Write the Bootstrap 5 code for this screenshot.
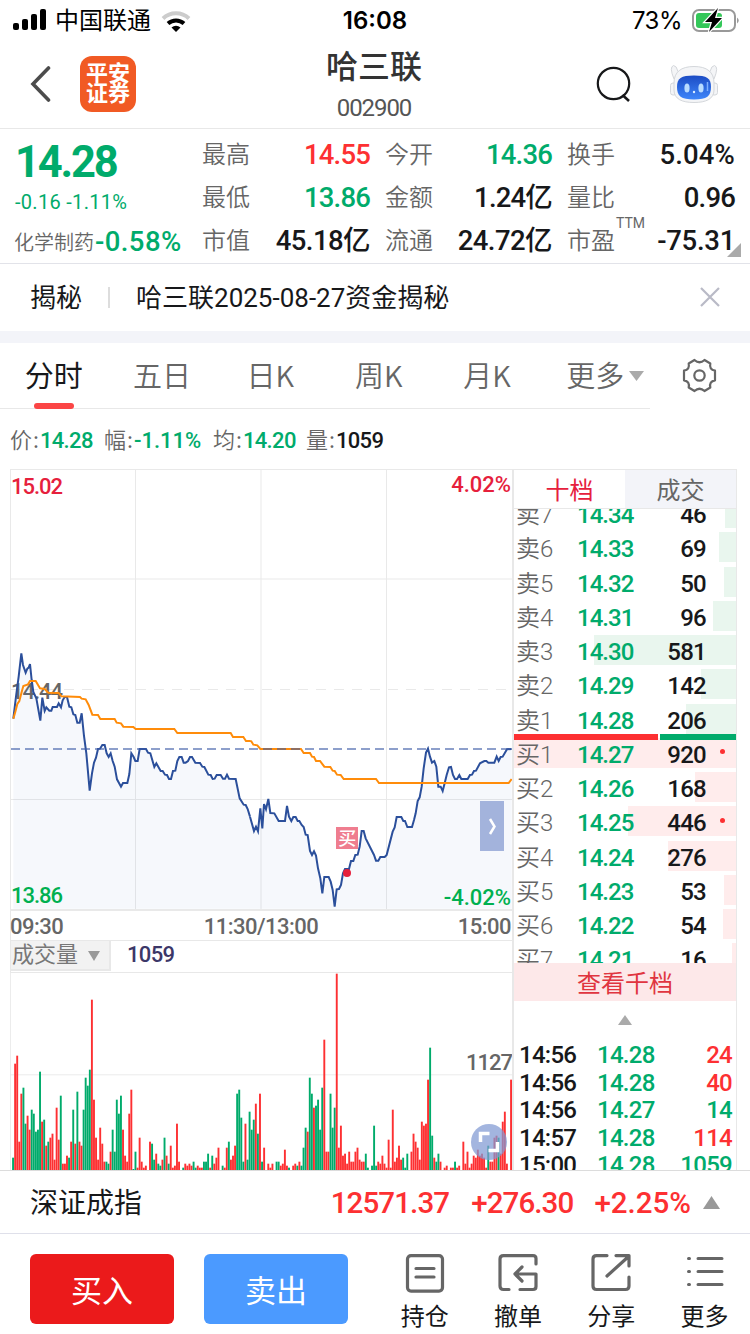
<!DOCTYPE html>
<html lang="zh-CN">
<head>
<meta charset="utf-8">
<meta name="viewport" content="width=device-width, initial-scale=1">
<title>哈三联 002900</title>
<link href="https://cdn.jsdelivr.net/npm/bootstrap@5.3.0/dist/css/bootstrap.min.css" rel="stylesheet">
<style>
  body { width: 750px; height: 1334px; overflow: hidden; background: #fff; color: #17181a; font-family: Roboto, "Noto Sans CJK SC", sans-serif; font-size: 24px; line-height: 1; }
  svg { display: block; flex: none; }
  .up { color: #fd3032; } .down { color: #00ab6b; } .soft { color: #666; }
  .num { font-weight: 500; letter-spacing: -.03em; white-space: nowrap; }
  .cjk-light { font-family: "Noto Sans CJK SC", sans-serif; font-weight: 350; }
  .statusbar { height: 40px; padding: 0 9px 0 13px; font-family: Inter, "Noto Sans CJK SC", sans-serif; color: #000; }
  .titlebar { height: 89px; border-bottom: 1px solid #e8e8e8; }
  .broker { width: 56px; height: 56px; border-radius: 12px; background: #f15a24; color: #fff; font-weight: 700; font-size: 22px; line-height: 20px; padding-top: 8px; }
  .stock-name { font-size: 32px; line-height: 40px; font-weight: 500; color: #333; }
  .stock-code { font-size: 24px; line-height: 24px; color: #555; letter-spacing: -.045em; }
  .quote { height: 135px; border-bottom: 1px solid #e2e3e9; }
  .quote-main { width: 202px; padding-left: 15px; }
  .big-price { font-size: 43.5px; line-height: 43px; font-weight: 700; letter-spacing: -.05em; margin-top: 12px; }
  .stats { grid-template-columns: 168px 167px 168px; column-gap: 15px; grid-template-rows: 43px 43px 43px; padding-top: 4px; }
  .stats .num { font-size: 27.5px; }
  .stats .cjk-light { margin-top: -3px; }
  .ttm { position: absolute; left: 49px; top: -3px; font-size: 14px; font-family: Roboto, sans-serif; }
  .corner { position: absolute; right: -6px; bottom: 5px; }
  .news { height: 67px; padding: 0 29px 0 30px; font-size: 26px; }
  .news .sep { width: 2px; height: 21px; background: #ddd; margin: 0 26px; }
  .band { height: 12px; background: #f3f4f9; }
  .tabs { width: 650px; height: 66px; border-bottom: 1px solid #e8e8e8; font-size: 29px; }
  .tabs > div { flex: 1 1 0; position: relative; padding: 0 1px 2px 0; }
  .tabs .on { color: #17181a; font-weight: 400; }
  .tabs .on::after { content: ""; position: absolute; left: 34px; bottom: -1px; width: 40px; height: 6px; border-radius: 3px; background: #fb4545; }
  .legend-row { height: 60px; padding: 1px 0 0 10px; font-size: 22px; }
  .legend-row .cjk-light { letter-spacing: 1px; }
  .board { height: 702px; padding-left: 10px; border-bottom: 1px solid #dcdcdc; overflow: hidden; }
  .charts { width: 502px; flex: none; }
  .depth { width: 225px; flex: none; border: 1px solid #e8e8e8; border-width: 1px 1px 0 2px; }
  .depth-tabs { height: 39px; border-bottom: 1px solid #e8e8e8; }
  .depth-tabs > div { flex: 1 1 0; padding-top: 3px; }
  .depth-tabs .off { background: #f3f4f9; }
  .levels { height: 454px; overflow: hidden; }
  .levels .rows { margin-top: -11px; }
  .level { position: relative; height: 34.27px; line-height: 35px; }
  .level i { position: absolute; right: 0; top: 0; height: 30px; background: #e9f6ee; }
  .level.buy i { background: #ffecec; }
  .level span { position: relative; }
  .level .lbl { width: 63px; padding-left: 2px; font-size: 24px; font-family: Roboto, "Noto Sans CJK SC", sans-serif; font-weight: 350; color: #666; white-space: nowrap; }
  .level .px { width: 60px; letter-spacing: -.04em; }
  .level .vol { width: 69px; text-align: right; }
  .level .dot { width: 5px; height: 5px; border-radius: 50%; background: #fd3032; margin: 0 0 6px 14px; }
  .balance { position: absolute; left: 0; right: 0; top: 225px; height: 6px; gap: 2px; }
  .more-levels { height: 38px; padding-top: 4px; background: #fde8e9; color: #e03540; }
  .ticks { line-height: 27.5px; padding: 0 4px 0 5px; }
  .volbar { height: 33px; border: solid #e8e8e8; border-width: 1px 0 1px 1px; }
  .volpick { width: 100px; height: 30px; background: #f2f2f2; border: solid #e8e8e8; border-width: 0 2px 2px 0; font-size: 22px; color: #777; padding-left: 1px; }
  .indexbar { height: 63px; border-bottom: 1px solid #dfe0ea; padding: 4px 30px 0 30px; font-size: 28px; }
  .indexbar .num { font-size: 29.5px; }
  .footer-bar { height: 100px; padding: 20px 0 0 30px; }
  .trade { width: 144px; height: 70px; flex: none; border: 0; border-radius: 6px; font-size: 31px; color: #fff; padding: 4px 0 0; margin-right: 30px; }
  .tool { width: 93.3px; flex: none; }
  .tool div { margin-top: 11px; }
</style>
</head>
<body>

<div class="statusbar d-flex align-items-center position-relative">
  <svg width="34" height="22" viewBox="0 0 34 22"><rect x="0" y="14" width="6" height="7" rx="2"/><rect x="9" y="10" width="6" height="11" rx="2"/><rect x="18" y="5" width="6" height="16" rx="2"/><rect x="27" y="0" width="6" height="21" rx="2"/></svg>
  <span class="ms-2" style="margin-top:2px">中国联通</span>
  <svg style="margin:3px 0 0 8px" width="34" height="24" viewBox="0 0 34 24"><g fill="none"><path d="M4 8.500a19 19 0 0 1 26 0" stroke="#ccc" stroke-width="4"/><path d="M9 13.600a12 12 0 0 1 16 0" stroke="#000" stroke-width="4"/></g><path d="M12.500 17.500a7 7 0 0 1 9 0L17 22z"/></svg>
  <span class="position-absolute start-50 translate-middle-x fw-semibold" style="top:9px">16:08</span>
  <span class="ms-auto" style="letter-spacing:-.5px;margin-top:2px">73%</span>
  <svg style="margin-left:9px" width="50" height="26" viewBox="0 0 50 26"><rect x="2" y="3" width="42" height="21" rx="6" fill="none" stroke="#999" stroke-width="2"/><path d="M46 10.500q3.500 3 0 6z" fill="#999"/><rect x="5" y="6" width="26" height="15" rx="3" fill="#34c759"/><path d="M27 1L14 15h7l-3 10 13-14h-7z" stroke="#fff" stroke-width="2.500"/><path d="M27 1L14 15h7l-3 10 13-14h-7z"/></svg>
</div>

<header class="titlebar d-flex align-items-start position-relative">
  <svg style="margin:26px 0 0 29px" width="24" height="36" viewBox="0 0 24 36"><path d="M19.500 2L4 18l15.500 16" fill="none" stroke="#4c4c4c" stroke-width="3.600" stroke-linecap="round"/></svg>
  <div class="broker text-center" style="margin:16px 0 0 27px">平安<br>证券</div>
  <div class="position-absolute start-50 translate-middle-x text-center" style="top:7px;margin-left:-1px">
    <div class="stock-name">哈三联</div>
    <div class="stock-code" style="margin-top:9px">002900</div>
  </div>
  <svg class="ms-auto" style="margin:24px 31px 0 0" width="40" height="42" viewBox="594 64 40 42"><circle cx="614.500" cy="83.500" r="15.700" fill="none" stroke="#17181a" stroke-width="2.200"/><path d="M623.500 95l6.500 6" stroke="#17181a" stroke-width="2.500"/></svg>
  <svg style="margin:23px 31px 0 5px" width="50" height="44" viewBox="0 0 50 44">
    <defs><linearGradient id="face" x1="0" y1="0" x2="0" y2="1"><stop offset="0" stop-color="#1c4cc4"/><stop offset="1" stop-color="#3e86fa"/></linearGradient></defs>
    <g fill="#f4f5f7" stroke="#d4d7db" stroke-width="1"><path d="M5 16Q0 4 4.500 2.500q3 0 4.500 6l6-1M45 16Q50 4 45.500 2.500q-3 0-4.500 6l-6-1"/><rect x="1.500" y="20" width="6" height="12" rx="2.500"/><rect x="42.500" y="20" width="6" height="12" rx="2.500"/><path d="M25 3.500C38 3.500 45 9 45 20V27C45 36 37 39.500 25 39.500S5 36 5 27V20C5 9 12 3.500 25 3.500Z"/></g>
    <path d="M25 12.500C38 12.500 42 15 42 24S38 36.500 25 36.500 8 33 8 24 12 12.500 25 12.500Z" fill="url(#face)"/><ellipse cx="18" cy="25" rx="2.600" ry="4.500" fill="#b9dcff"/><ellipse cx="32" cy="25" rx="2.600" ry="4.500" fill="#b9dcff"/><circle cx="25" cy="29" r="1.200" fill="#dceeff"/><path d="M38.500 19v9" stroke="#7fb0ff" stroke-width="1.500"/>
  </svg>
</header>

<section class="quote d-flex">
  <div class="quote-main">
    <div class="big-price down">14.28</div>
    <div class="down" style="font-size:20px;line-height:20px;margin-top:8px;letter-spacing:.015em">-0.16 -1.11%</div>
    <div class="d-flex align-items-center" style="margin-top:16px"><span class="cjk-light soft" style="font-size:20px;margin-left:-1px">化学制药</span><span class="num down" style="font-size:27.500px;letter-spacing:.015em;margin-left:1px">-0.58%</span></div>
  </div>
  <div class="stats d-grid">
    <div class="d-flex justify-content-between align-items-center"><span class="cjk-light soft">最高</span><span class="num up">14.55</span></div>
    <div class="d-flex justify-content-between align-items-center"><span class="cjk-light soft">今开</span><span class="num down">14.36</span></div>
    <div class="d-flex justify-content-between align-items-center"><span class="cjk-light soft">换手</span><span class="num" style="letter-spacing:.005em">5.04%</span></div>
    <div class="d-flex justify-content-between align-items-center"><span class="cjk-light soft">最低</span><span class="num down">13.86</span></div>
    <div class="d-flex justify-content-between align-items-center"><span class="cjk-light soft">金额</span><span class="num">1.24亿</span></div>
    <div class="d-flex justify-content-between align-items-center"><span class="cjk-light soft">量比</span><span class="num">0.96</span></div>
    <div class="d-flex justify-content-between align-items-center"><span class="cjk-light soft">市值</span><span class="num" style="letter-spacing:-.02em">45.18亿</span></div>
    <div class="d-flex justify-content-between align-items-center"><span class="cjk-light soft">流通</span><span class="num" style="letter-spacing:-.02em">24.72亿</span></div>
    <div class="d-flex justify-content-between align-items-center position-relative"><span class="cjk-light soft">市盈</span><span class="ttm soft">TTM</span><span class="num" style="letter-spacing:-.01em">-75.31</span>
      <svg class="corner" width="14" height="14"><path d="M14 0v14H0z" fill="#aaa"/></svg></div>
  </div>
</section>

<section class="news d-flex align-items-center">
  <span>揭秘</span><span class="sep"></span><span>哈三联2025-08-27资金揭秘</span>
  <svg class="ms-auto" width="22" height="22" viewBox="0 0 22 22"><path d="M2 1l18 18M20 1L2 19" stroke="#b9bac6" stroke-width="2.200"/></svg>
</section>
<div class="band"></div>

<nav class="d-flex">
  <div class="tabs d-flex cjk-light soft">
    <div class="on d-flex align-items-center justify-content-center">分时</div>
    <div class="d-flex align-items-center justify-content-center">五日</div>
    <div class="d-flex align-items-center justify-content-center">日K</div>
    <div class="d-flex align-items-center justify-content-center">周K</div>
    <div class="d-flex align-items-center justify-content-center">月K</div>
    <div class="d-flex align-items-center justify-content-center">更多<svg class="position-absolute" style="left:87px;top:28px" width="15" height="11"><path d="M0 0h15L7.500 10z" fill="#aaa"/></svg></div>
  </div>
  <svg style="margin:15px 0 0 32px" width="35" height="35" viewBox="-17.500 -17.500 35 35" fill="none" stroke="#666" stroke-width="2.200" stroke-linejoin="round"><path d="M-5-15.500Q0-11 5-15.500L10.800-12Q9.500-6 15.500-4.800V4.800Q9.500 6 10.800 12L5 15.500Q0 11-5 15.500L-10.800 12Q-9.500 6-15.500 4.800V-4.800Q-9.500-6-10.800-12Z"/><circle r="5.200"/></svg>
</nav>

<div class="legend-row d-flex align-items-center">
  <div style="width:94px"><span class="cjk-light soft">价:</span><span class="num down">14.28</span></div>
  <div style="width:109px"><span class="cjk-light soft">幅:</span><span class="num down" style="letter-spacing:0">-1.11%</span></div>
  <div style="width:93px"><span class="cjk-light soft">均:</span><span class="num down">14.20</span></div>
  <div><span class="cjk-light soft">量:</span><span class="num">1059</span></div>
</div>

<main class="board d-flex">
  <div class="charts">
    <svg width="502" height="471" viewBox="10 469 502 471" font-family="Roboto" font-size="22" font-weight="500" letter-spacing="-.5">
      <g stroke="#e9e9e9" stroke-width="1" fill="none"><path d="M10 469.500h503M10.500 469v471M135.500 469v441M261 469v441M386.500 469v441M10 579h503M10 799.500h503"/><path d="M10 910h503" stroke-width="2"/><path d="M10 689.500h503" stroke-dasharray="10 8"/></g>
      <text x="11" y="699" fill="#666" letter-spacing="-1">14.44</text>
      <g transform="translate(0 630) scale(.33333)" stroke-linejoin="miter">
        <path fill="#6482c8" fill-opacity=".06" d="M40 836V266L48 200 56 140 64 70 69 105 77 128 82 116 86 113 90 102 95 150 100 186 109 205 121 272 127 203 134 243 139 232 148 242 154 242 158 231 171 231 176 220 183 232 188 211 194 201 201 201 208 230 214 232 220 253 226 255 232 278 239 278 245 250 252 318 259 370 269 482 276 430 282 398 288 383 294 357 300 356 307 345 314 345 320 370 326 381 332 370 338 393 344 410 351 448 363 470 369 459 382 459 388 432 394 370 401 381 406 393 413 393 419 357 438 357 444 368 451 370 463 411 469 400 482 423 488 423 495 434 501 435 507 447 513 447 519 423 526 422 532 393 538 381 545 381 551 398 557 398 564 393 570 381 576 381 586 398 600 399 607 410 613 411 625 434 632 435 638 447 644 446 650 435 662 435 669 446 675 446 681 434 687 446 707 447 719 505 731 524 737 525 743 537 750 560V836z"/>
        <path fill="none" stroke="#2b4f9b" stroke-width="6" d="M40 266L48 200 56 140 64 70 69 105 77 128 82 116 86 113 90 102 95 150 100 186 109 205 121 272 127 203 134 243 139 232 148 242 154 242 158 231 171 231 176 220 183 232 188 211 194 201 201 201 208 230 214 232 220 253 226 255 232 278 239 278 245 250 252 318 259 370 269 482 276 430 282 398 288 383 294 357 300 356 307 345 314 345 320 370 326 381 332 370 338 393 344 410 351 448 363 470 369 459 382 459 388 432 394 370 401 381 406 393 413 393 419 357 438 357 444 368 451 370 463 411 469 400 482 423 488 423 495 434 501 435 507 447 513 447 519 423 526 422 532 393 538 381 545 381 551 398 557 398 564 393 570 381 576 381 586 398 600 399 607 410 613 411 625 434 632 435 638 447 644 446 650 435 662 435 669 446 675 446 681 434 687 446 707 447 719 505 731 524 737 525 743 537 750 560"/>
        <path fill="none" stroke="#ff8c0a" stroke-width="6" d="M40 266L46 245 52 222 58 213 64 190 70 168 84 163 90 153 107 153 120 175 134 177 145 188 176 189 184 199 240 201 245 206 257 208 266 225 277 254 294 255 301 267 344 267 350 278 363 280 370 290 400 291 407 297 523 297 532 309 692 309 699 321 730 321 738 333 750 333"/>
      </g>
      <g transform="translate(250 720) scale(.33333)">
        <path fill="#6482c8" fill-opacity=".06" d="M0 566V290L12 333 18 320 24 334 31 265 37 325 42 252 48 268 55 237 61 279 73 280 86 303 105 303 111 258 117 290 124 303 130 291 137 291 143 303 148 303 155 315 161 321 167 344 173 345 180 393 186 405 192 394 198 407 204 445 211 475 217 520 223 471 236 471 242 485 248 510 254 560 260 508 267 507 273 495 279 460 285 447 297 447 303 423 310 423 316 405 323 404 329 380 335 333 341 333 347 355 372 405 378 422 385 422 391 411 404 411 410 405 428 335 434 322 440 291 454 291 460 303 465 303 472 321 486 321 492 300 497 280 503 243 509 232 515 200 521 145 528 98 534 86 540 110 546 128 553 123 559 140 565 200 572 200 578 213 584 190 590 165 597 142 603 141 609 165 615 177 621 177 628 165 634 177 653 177 660 165 666 164 672 153 678 152 690 130 703 123 709 123 715 128 733 128 740 110 746 123 752 111 758 110 771 88 785 87V566z"/>
        <path fill="none" stroke="#2b4f9b" stroke-width="6" d="M0 290L12 333 18 320 24 334 31 265 37 325 42 252 48 268 55 237 61 279 73 280 86 303 105 303 111 258 117 290 124 303 130 291 137 291 143 303 148 303 155 315 161 321 167 344 173 345 180 393 186 405 192 394 198 407 204 445 211 475 217 520 223 471 236 471 242 485 248 510 254 560 260 508 267 507 273 495 279 460 285 447 297 447 303 423 310 423 316 405 323 404 329 380 335 333 341 333 347 355 372 405 378 422 385 422 391 411 404 411 410 405 428 335 434 322 440 291 454 291 460 303 465 303 472 321 486 321 492 300 497 280 503 243 509 232 515 200 521 145 528 98 534 86 540 110 546 128 553 123 559 140 565 200 572 200 578 213 584 190 590 165 597 142 603 141 609 165 615 177 621 177 628 165 634 177 653 177 660 165 666 164 672 153 678 152 690 130 703 123 709 123 715 128 733 128 740 110 746 123 752 111 758 110 771 88 785 87"/>
        <path fill="none" stroke="#ff8c0a" stroke-width="6" d="M0 63L4 64 10 74 22 76 31 87 153 87 161 99 180 99 186 110 192 111 198 123 210 123 223 140 241 141 248 152 254 153 261 164 272 165 281 177 378 177 387 189 776 189 785 177"/>
      </g>
      <path d="M11 749h500" stroke="#3a5aa5" stroke-opacity=".58" stroke-width="2" stroke-dasharray="9 5"/>
      <rect x="336" y="827" width="22" height="22" fill="#ef7d8f"/><text x="347" y="845" font-family="Noto Sans CJK SC" font-size="18" fill="#fff" text-anchor="middle">买</text>
      <circle cx="347" cy="873" r="4" fill="#e6203c"/>
      <rect x="480" y="801" width="24" height="50" fill="#a3b3dc"/><path d="M490 819l4.500 7.500-4.500 7.500" fill="none" stroke="#fff" stroke-width="2.500"/>
      <text x="11" y="494" fill="#e6203c" letter-spacing="-1">15.02</text><text x="511" y="492" fill="#e6203c" text-anchor="end" letter-spacing="0">4.02%</text>
      <text x="11" y="903" fill="#00b050" letter-spacing="-1">13.86</text><text x="511" y="905" fill="#00b050" text-anchor="end" letter-spacing="0">-4.02%</text>
      <g fill="#666"><text x="10" y="934">09:30</text><text x="261" y="934" text-anchor="middle">11:30/13:00</text><text x="511" y="934" text-anchor="end">15:00</text></g>
    </svg>
    <div class="volbar d-flex">
      <div class="volpick d-flex align-items-center">成交量<svg style="margin-left:9px" width="14" height="11"><path d="M1 1h12L7 11z" fill="#999"/></svg></div>
      <span class="num" style="color:#3c3768;font-size:22px;margin:3px 0 0 16px">1059</span>
    </div>
    <svg width="502" height="197" viewBox="10 973 502 197" overflow="visible">
      <path d="M10.500 973v197M10 1074.800h503" stroke="#ececec"/>
      <g id="volumes"></g>
      <text x="512" y="1070" text-anchor="end" font-family="Roboto" font-size="22" font-weight="500" letter-spacing="-1" fill="#666">1127</text>
      <circle cx="489" cy="1142" r="18" fill="#8099d2" fill-opacity=".72"/><path d="M480.500 1142v-8.500h9M497.500 1142v8.500h-9" fill="none" stroke="#fff" stroke-width="3.500"/>
    </svg>
  </div>

  <aside class="depth">
    <div class="depth-tabs d-flex text-center">
      <div class="d-flex align-items-center justify-content-center" style="color:#e6203c">十档</div>
      <div class="off d-flex align-items-center justify-content-center soft">成交</div>
    </div>
    <div class="levels position-relative"><div class="rows" id="levels"></div>
      <div class="balance d-flex"><div style="width:144px;background:#fd3032"></div><div class="flex-fill" style="background:#00ab6b"></div></div>
    </div>
    <div class="more-levels d-flex align-items-center justify-content-center">查看千档</div>
    <svg class="mx-auto" style="margin-top:14px;margin-bottom:17px" width="14" height="10"><path d="M0 10L7 0l7 10z" fill="#aaa"/></svg>
    <div class="ticks num" id="ticks"></div>
  </aside>
</main>

<section class="indexbar d-flex align-items-center">
  <span class="me-auto">深证成指</span>
  <span class="num up">12571.37</span><span class="num up" style="margin-left:22px">+276.30</span><span class="num up" style="margin-left:21px;letter-spacing:0">+2.25%</span>
  <svg style="margin:-4px 0 0 12px" width="17" height="13"><path d="M0 13L8.500 0 17 13z" fill="#999"/></svg>
</section>

<footer class="footer-bar d-flex align-items-start">
  <button class="trade" style="background:#eb1a1b">买入</button>
  <button class="trade" style="background:#4b9aff">卖出</button>
  <div class="d-flex text-center">
    <div class="tool"><svg class="mx-auto" width="42" height="40" viewBox="-21 0 42 40" fill="none" stroke="#666" stroke-width="3.200" stroke-linecap="round"><rect x="-17.500" y="1.600" width="35" height="35.500" rx="3.500"/><path d="M-9 14.500H9M-9 23H9"/></svg><div>持仓</div></div>
    <div class="tool"><svg class="mx-auto" width="42" height="40" viewBox="-21 0 42 40" fill="none" stroke="#666" stroke-width="3.200" stroke-linecap="round" stroke-linejoin="round"><path d="M18 10V4.500Q18 1.600 15 1.600H-14.500Q-18 1.600-18 5V32Q-18 35.500-14.500 35.500H-9M4 13l-7 7 7 7M-3 20H18V32.500Q18 35.500 15 35.500H2"/></svg><div>撤单</div></div>
    <div class="tool"><svg class="mx-auto" width="42" height="40" viewBox="-21 0 42 40" fill="none" stroke="#666" stroke-width="3.200" stroke-linecap="round" stroke-linejoin="round"><path d="M-4 1.600H-14.500Q-18 1.600-18 5V32Q-18 35.500-14.500 35.500H14.500Q18 35.500 18 32V23M5 1.600H18V12M17 3L-4 22"/></svg><div>分享</div></div>
    <div class="tool"><svg class="mx-auto" width="42" height="40" viewBox="-21 0 42 40" fill="none" stroke="#666" stroke-width="3" stroke-linecap="round"><path d="M-16.500 4.500h1M-16.500 17.500h1M-16.500 30.500h1M-7 4.500H17M-7 17.500H17M-7 30.500H17"/></svg><div>更多</div></div>
  </div>
</footer>

<script src="https://cdn.jsdelivr.net/npm/bootstrap@5.3.0/dist/js/bootstrap.bundle.min.js"></script>
<script>
  // Order book: label, price, volume, bar width, new-order mark
  const book = [
    ['卖7','14.34',46,11],['卖6','14.33',69,17],['卖5','14.32',50,12],['卖4','14.31',96,23],['卖3','14.30',581,142],['卖2','14.29',142,35],['卖1','14.28',206,50],
    ['买1','14.27',920,222,1],['买2','14.26',168,41],['买3','14.25',446,108,1],['买4','14.24',276,68],['买5','14.23',53,12],['买6','14.22',54,13],['买7','14.21',16,4]];
  document.getElementById('levels').innerHTML = book.map(([l,p,v,w,d]) =>
    `<div class="level d-flex ${l[0]==='买'?'buy':''}"><i style="width:${w}px"></i><span class="lbl">${l}</span><span class="px num down">${p}</span><span class="vol num">${v}</span>${d?'<span class="dot align-self-center"></span>':''}</div>`).join('');

  const ticks = [['14:56','14.28',24,'up'],['14:56','14.28',40,'up'],['14:56','14.27',14,'down'],['14:57','14.28',114,'up'],['15:00','14.28',1059,'down']];
  document.getElementById('ticks').innerHTML = ticks.map(([t,p,v,c]) =>
    `<div class="d-flex"><span style="width:78px">${t}</span><span class="down">${p}</span><span class="ms-auto ${c}">${v}</span></div>`).join('');

  // One bar per minute: direction and the bar's top on a 720-unit scale
  const vols = 'g683 r401 r377 r635 r491 g473 g581 r557 r599 g539 g551 g605 g599 g425 r575 g569 r647 g635 r623 r611 r689 r533 r629 g497 r701 r701 r677 g683 r635 g539 r641 g485 r635 r647 g539 g443 g467 g419 r209 r509 r623 r689 r593 r641 r695 g695 g701 r665 g599 g665 g509 g551 g497 r599 r677 r695 r551 r479 g717 g665 r713 r623 r695 r713 r707 g720 r635 g641 g689 r671 g701 g707 r689 g623 r677 g701 r647 r713 r707 r581 r695 g720 g713 r701 r707 r701 r707 g695 g713 r707 r713 r713 g695 g695 g671 r713 g677 r701 r683 r653 g720 g707 r713 r653 g635 r689 r677 r647 g491 g479 g563 g695 r581 g689 g545 g599 g569 r521 g611 r491 g695 r653 g720 r701 r713 r701 g720 g695 g695 r707 r701 r659 r707 g713 g720 r707 r701 g707 r695 g707 g653 g593 r605 g443 g491 r533 g527 g509 g599 g473 r329 r665 r665 g491 g593 g533 r131 r653 r587 r677 r671 r701 r665 r695 r695 r665 r653 r689 r695 r695 g671 g713 g720 g707 g587 g707 r695 r701 r677 r701 r713 r629 r713 r539 r695 r683 r647 r689 g683 g713 g671 g720 r665 r611 r635 r653 r689 r575 r587 r581 r449 g353 g617 r683 g695 g671 r695 g720 r713 r707 g720 r713 r713 g695 r713 r707 g720 r635 r701 r665 r713 r701 r677 r683 r659 r677 r671 r683 r713 g647 r695 r695 r623 r617 g623 r671 r575 r545 r701 g720 r449'.split(' ');
  document.getElementById('volumes').innerHTML = vols.map((s,i) => {
    const h = (720 - +s.slice(1)) / 3;
    return `<rect x="${(12.1 + i*2.075).toFixed(2)}" y="${(1170-h).toFixed(2)}" width="1.9" height="${h.toFixed(2)}" fill="${s[0]==='r'?'#fd3032':'#00ab6b'}"/>`;
  }).join('');
</script>
</body>
</html>
